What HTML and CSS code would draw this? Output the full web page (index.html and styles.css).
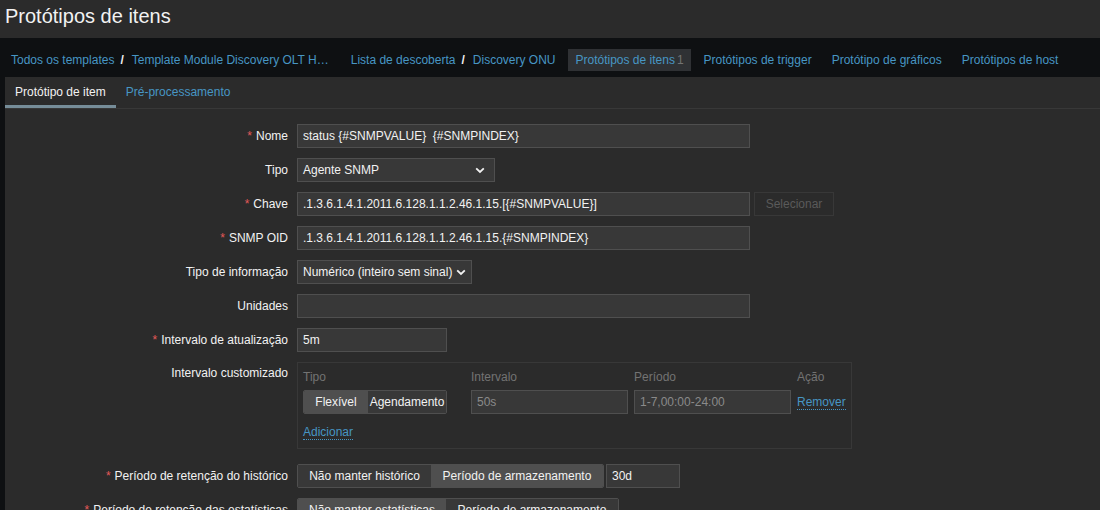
FILE: index.html
```html
<!DOCTYPE html>
<html lang="pt">
<head>
<meta charset="utf-8">
<title>Protótipos de itens</title>
<link rel="stylesheet" href="styles.css">
</head>
<body>
<header class="page-header">
  <h1 class="page-title">Protótipos de itens</h1>
</header>
<nav class="obj-nav">
  <ul class="obj-list">
    <li class="obj-item">
      <a class="link" href="#">Todos os templates</a><span class="sep">/</span><a class="link tpl" href="#">Template Module Discovery OLT H…</a>
    </li>
    <li class="obj-item">
      <a class="link" href="#">Lista de descoberta</a><span class="sep">/</span><a class="link" href="#">Discovery ONU</a>
    </li>
    <li class="obj-item is-selected"><a class="link" href="#">Protótipos de itens</a><sup class="count">1</sup></li>
    <li class="obj-item"><a class="link" href="#">Protótipos de trigger</a></li>
    <li class="obj-item"><a class="link" href="#">Protótipo de gráficos</a></li>
    <li class="obj-item"><a class="link" href="#">Protótipos de host</a></li>
  </ul>
</nav>
<main class="main">
  <ul class="tabs">
    <li class="tab is-active">Protótipo de item</li>
    <li class="tab"><a class="link" href="#">Pré-processamento</a></li>
  </ul>
  <form class="form-grid">
    <label class="f-label req">Nome</label>
    <div class="f-field"><input class="textbox w-wide" type="text" value="status {#SNMPVALUE}  {#SNMPINDEX}"></div>

    <label class="f-label">Tipo</label>
    <div class="f-field">
      <div class="select w-tipo"><span>Agente SNMP</span><svg class="chev" width="10" height="7" viewBox="0 0 10 7"><path d="M1.2 1.3 L5 5 L8.8 1.3" fill="none" stroke="#f2f2f2" stroke-width="1.8"/></svg></div>
    </div>

    <label class="f-label req">Chave</label>
    <div class="f-field row-inline">
      <input class="textbox w-wide" type="text" value=".1.3.6.1.4.1.2011.6.128.1.1.2.46.1.15.[{#SNMPVALUE}]">
      <button class="btn-disabled" type="button">Selecionar</button>
    </div>

    <label class="f-label req">SNMP OID</label>
    <div class="f-field"><input class="textbox w-wide" type="text" value=".1.3.6.1.4.1.2011.6.128.1.1.2.46.1.15.{#SNMPINDEX}"></div>

    <label class="f-label">Tipo de informação</label>
    <div class="f-field">
      <div class="select w-info"><span>Numérico (inteiro sem sinal)</span><svg class="chev" width="10" height="7" viewBox="0 0 10 7"><path d="M1.2 1.3 L5 5 L8.8 1.3" fill="none" stroke="#f2f2f2" stroke-width="1.8"/></svg></div>
    </div>

    <label class="f-label">Unidades</label>
    <div class="f-field"><input class="textbox w-wide" type="text" value=""></div>

    <label class="f-label req">Intervalo de atualização</label>
    <div class="f-field"><input class="textbox w-small" type="text" value="5m"></div>

    <label class="f-label label-top">Intervalo customizado</label>
    <div class="f-field">
      <div class="custom-box">
        <div class="cb-grid">
          <div class="cb-head">Tipo</div>
          <div class="cb-head">Intervalo</div>
          <div class="cb-head">Período</div>
          <div class="cb-head">Ação</div>

          <div class="segmented">
            <span class="seg is-on w-flex">Flexível</span><span class="seg w-agenda">Agendamento</span>
          </div>
          <input class="textbox w-cb" type="text" placeholder="50s">
          <input class="textbox w-cb" type="text" placeholder="1-7,00:00-24:00">
          <div class="cb-action"><a class="link dotted" href="#">Remover</a></div>
        </div>
        <div class="cb-add"><a class="link dotted" href="#">Adicionar</a></div>
      </div>
    </div>

    <label class="f-label req">Período de retenção do histórico</label>
    <div class="f-field row-inline">
      <div class="segmented">
        <span class="seg w-nohist">Não manter histórico</span><span class="seg is-on w-store">Período de armazenamento</span>
      </div>
      <input class="textbox w-30d" type="text" value="30d">
    </div>

    <label class="f-label req">Período de retenção das estatísticas</label>
    <div class="f-field row-inline">
      <div class="segmented">
        <span class="seg is-on w-nostat">Não manter estatísticas</span><span class="seg w-store">Período de armazenamento</span>
      </div>
    </div>
  </form>
</main>
</body>
</html>
```

FILE: styles.css
```css
* { box-sizing: border-box; }

html, body {
  margin: 0;
  padding: 0;
  height: 510px;
  overflow: hidden;
}

body {
  background: #0e1012;
  color: #f2f2f2;
  font-family: "Liberation Sans", Arial, sans-serif;
  font-size: 12px;
}

.link {
  color: #4796c4;
  text-decoration: none;
}

.page-header {
  background: #2b2b2b;
  height: 38px;
  padding: 0 5px;
}

.page-title {
  margin: 0;
  font-weight: normal;
  font-size: 20px;
  line-height: 32px;
  color: #f2f2f2;
}

.obj-nav {
  background: #0e1012;
  height: 39px;
  padding: 11px 0 0 4px;
}

.obj-list {
  list-style: none;
  margin: 0;
  padding: 0;
  display: flex;
  gap: 6px;
}

.obj-item {
  height: 22px;
  line-height: 22px;
  padding: 0 7px;
  white-space: nowrap;
}

.obj-item.is-selected {
  background: #2f3134;
}

.sep {
  color: #f2f2f2;
  font-weight: bold;
  margin: 0 8px 0 6px;
}

.tpl {
  margin-right: 2px;
}

.count {
  color: #737373;
  font-size: 12px;
  vertical-align: baseline;
  margin-left: 2px;
}

.main {
  margin-left: 5px;
  background: #2b2b2b;
  height: 433px;
}

.tabs {
  list-style: none;
  margin: 0;
  padding: 0;
  display: flex;
  border-bottom: 1px solid #383838;
  height: 32px;
}

.tab {
  height: 31px;
  line-height: 26px;
  padding: 2px 10px 0 10px;
  border-bottom: 3px solid transparent;
}

.tab.is-active {
  color: #f2f2f2;
  border-bottom-color: #768d99;
}

.form-grid {
  display: grid;
  grid-template-columns: 283px 1fr;
  column-gap: 9px;
  row-gap: 10px;
  padding-top: 15px;
  margin: 0;
}

.f-label {
  text-align: right;
  line-height: 24px;
  color: #f2f2f2;
  white-space: nowrap;
}

.f-label.req::before {
  content: "*";
  color: #e45959;
  margin-right: 4px;
}

.f-label.label-top {
  line-height: 22px;
}

.f-field {
  min-height: 24px;
}

.row-inline {
  display: flex;
  align-items: center;
  gap: 4px;
}

.textbox {
  height: 24px;
  background: #383838;
  border: 1px solid #4f4f4f;
  color: #f2f2f2;
  font-family: "Liberation Sans", Arial, sans-serif;
  font-size: 12px;
  padding: 0 5px;
  margin: 0;
  outline: none;
  white-space: pre;
}

.textbox::placeholder {
  color: #8a8a8a;
}

.w-wide { width: 453px; }
.w-small { width: 150px; }
.w-cb { width: 157px; }
.w-30d { width: 74px; margin-left: -2px; }

.select {
  height: 24px;
  background: #383838;
  border: 1px solid #4f4f4f;
  display: flex;
  align-items: center;
  justify-content: space-between;
  padding: 0 9px 0 5px;
}

.w-tipo { width: 198px; }
.w-info { width: 175px; padding-right: 5px; }

.chev { display: block; }

.btn-disabled {
  height: 24px;
  width: 80px;
  background: #2b2b2b;
  border: 1px solid #383838;
  color: #5a5a5a;
  font-family: "Liberation Sans", Arial, sans-serif;
  font-size: 12px;
  padding: 0;
}

.custom-box {
  width: 555px;
  border: 1px solid #383838;
  padding: 5px 5px 7px 5px;
  margin-bottom: 5px;
}

.cb-grid {
  display: grid;
  grid-template-columns: 168px 163px 163px auto;
  row-gap: 4px;
}

.cb-head {
  color: #737373;
  line-height: 18px;
}

.cb-action {
  line-height: 24px;
}

.dotted {
  border-bottom: 1px dotted #4796c4;
}

.cb-add {
  margin-top: 9px;
  line-height: 18px;
}

.segmented {
  display: inline-flex;
  height: 24px;
  border: 1px solid #4f4f4f;
  border-radius: 2px;
  overflow: hidden;
  justify-self: start;
}

.seg {
  display: inline-block;
  line-height: 22px;
  text-align: center;
  background: #383838;
  color: #f2f2f2;
  white-space: nowrap;
}

.seg.is-on {
  background: #4f4f4f;
}

.w-flex { width: 64px; }
.w-agenda { width: 78px; }
.w-nohist { width: 133px; }
.w-store { width: 172px; }
.w-nostat { width: 148px; }
```
